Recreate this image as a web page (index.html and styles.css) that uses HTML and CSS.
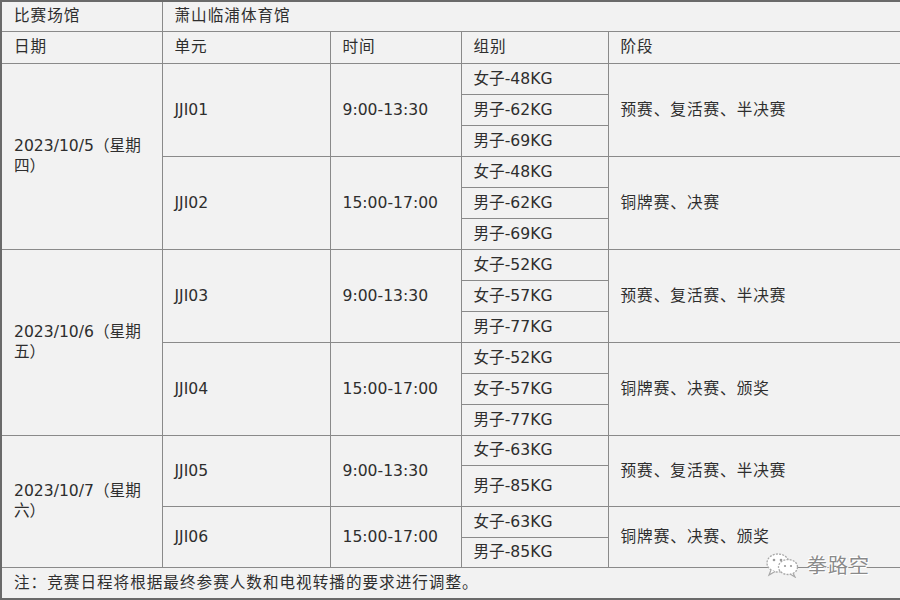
FILE: index.html
```html
<!DOCTYPE html>
<html lang="zh-CN">
<head>
<meta charset="utf-8">
<title>赛程</title>
<link rel="stylesheet" href="styles.css">
</head>
<body>
<div class="page">
<table class="sched">
  <colgroup>
    <col class="c1"><col class="c2"><col class="c3"><col class="c4"><col class="c5">
  </colgroup>
  <tr class="h30"><td class="zh">比赛场馆</td><td class="zh" colspan="4">萧山临浦体育馆</td></tr>
  <tr class="h32"><td class="zh">日期</td><td class="zh">单元</td><td class="zh">时间</td><td class="zh">组别</td><td class="zh">阶段</td></tr>

  <tr class="h31"><td rowspan="6">2023/10/5（星期<br>四）</td><td rowspan="3">JJI01</td><td rowspan="3">9:00-13:30</td><td>女子-48KG</td><td class="zh" rowspan="3">预赛、复活赛、半决赛</td></tr>
  <tr class="h31"><td>男子-62KG</td></tr>
  <tr class="h31"><td>男子-69KG</td></tr>
  <tr class="h31"><td rowspan="3">JJI02</td><td rowspan="3">15:00-17:00</td><td>女子-48KG</td><td class="zh" rowspan="3">铜牌赛、决赛</td></tr>
  <tr class="h31"><td>男子-62KG</td></tr>
  <tr class="h31"><td>男子-69KG</td></tr>

  <tr class="h31"><td rowspan="6">2023/10/6（星期<br>五）</td><td rowspan="3">JJI03</td><td rowspan="3">9:00-13:30</td><td>女子-52KG</td><td class="zh" rowspan="3">预赛、复活赛、半决赛</td></tr>
  <tr class="h31"><td>女子-57KG</td></tr>
  <tr class="h31"><td>男子-77KG</td></tr>
  <tr class="h31"><td rowspan="3">JJI04</td><td rowspan="3">15:00-17:00</td><td>女子-52KG</td><td class="zh" rowspan="3">铜牌赛、决赛、颁奖</td></tr>
  <tr class="h31"><td>女子-57KG</td></tr>
  <tr class="h31"><td>男子-77KG</td></tr>

  <tr class="h30"><td rowspan="4">2023/10/7（星期<br>六）</td><td rowspan="2">JJI05</td><td rowspan="2">9:00-13:30</td><td>女子-63KG</td><td class="zh" rowspan="2">预赛、复活赛、半决赛</td></tr>
  <tr class="h41"><td>男子-85KG</td></tr>
  <tr class="h31"><td rowspan="2">JJI06</td><td rowspan="2">15:00-17:00</td><td>女子-63KG</td><td class="zh" rowspan="2">铜牌赛、决赛、颁奖</td></tr>
  <tr class="h30"><td>男子-85KG</td></tr>

  <tr class="h32"><td class="zh" colspan="5">注：竞赛日程将根据最终参赛人数和电视转播的要求进行调整。</td></tr>
</table>

<div class="watermark">
  <svg class="wx" width="36" height="26" viewBox="0 0 36 26">
    <ellipse cx="13" cy="11" rx="11" ry="9" fill="#fff" stroke="#a8a8a8" stroke-width="1.3" stroke-dasharray="2 1.2"/>
    <path d="M6 18 L4 23 L10 19.5" fill="#fff" stroke="#a8a8a8" stroke-width="1.2"/>
    <ellipse cx="23" cy="15" rx="9.5" ry="7.5" fill="#fff" stroke="#a8a8a8" stroke-width="1.3" stroke-dasharray="2 1.2"/>
    <path d="M28 21 L30 25 L25 22" fill="#fff" stroke="#a8a8a8" stroke-width="1.2"/>
    <circle cx="9" cy="8" r="1.3" fill="#999"/>
    <circle cx="16" cy="8" r="1.3" fill="#999"/>
    <circle cx="20" cy="14" r="1.1" fill="#999"/>
    <circle cx="26" cy="14" r="1.1" fill="#999"/>
  </svg>
  <span class="wm-text">拳路空</span>
</div>
</div>
</body>
</html>
```

FILE: styles.css
```css
html, body {
  margin: 0;
  padding: 0;
  background: #f2f2f2;
}

.page {
  position: relative;
  width: 900px;
  height: 600px;
  overflow: hidden;
}

.sched {
  border-collapse: collapse;
  table-layout: fixed;
  width: 900px;
  font-family: "DejaVu Sans", "Noto Sans CJK SC", sans-serif;
  font-size: 15.6px;
  color: #2e2e2e;
  background: #f2f2f2;
  border: 2px solid #6a6a6a;
}

.c1 { width: 161px; }
.c2 { width: 168px; }
.c3 { width: 131px; }
.c4 { width: 147px; }
.c5 { width: 293px; }

.sched td {
  border: 1px solid #8a8a8a;
  padding: 0 0 0 12px;
  vertical-align: middle;
  line-height: 20px;
  white-space: nowrap;
}

.sched td.zh {
  letter-spacing: 1px;
}

.h30 { height: 30px; }
.h31 { height: 31px; }
.h32 { height: 32px; }
.h41 { height: 41px; }

.watermark {
  position: absolute;
  left: 765px;
  top: 550px;
  display: flex;
  align-items: center;
  gap: 6px;
}

.wm-text {
  font-family: "Noto Sans CJK SC", sans-serif;
  font-size: 20px;
  color: #8a8a8a;
  letter-spacing: 1px;
  text-shadow: 1px 1px 0 #fff, -1px -1px 0 #fff;
}
```
